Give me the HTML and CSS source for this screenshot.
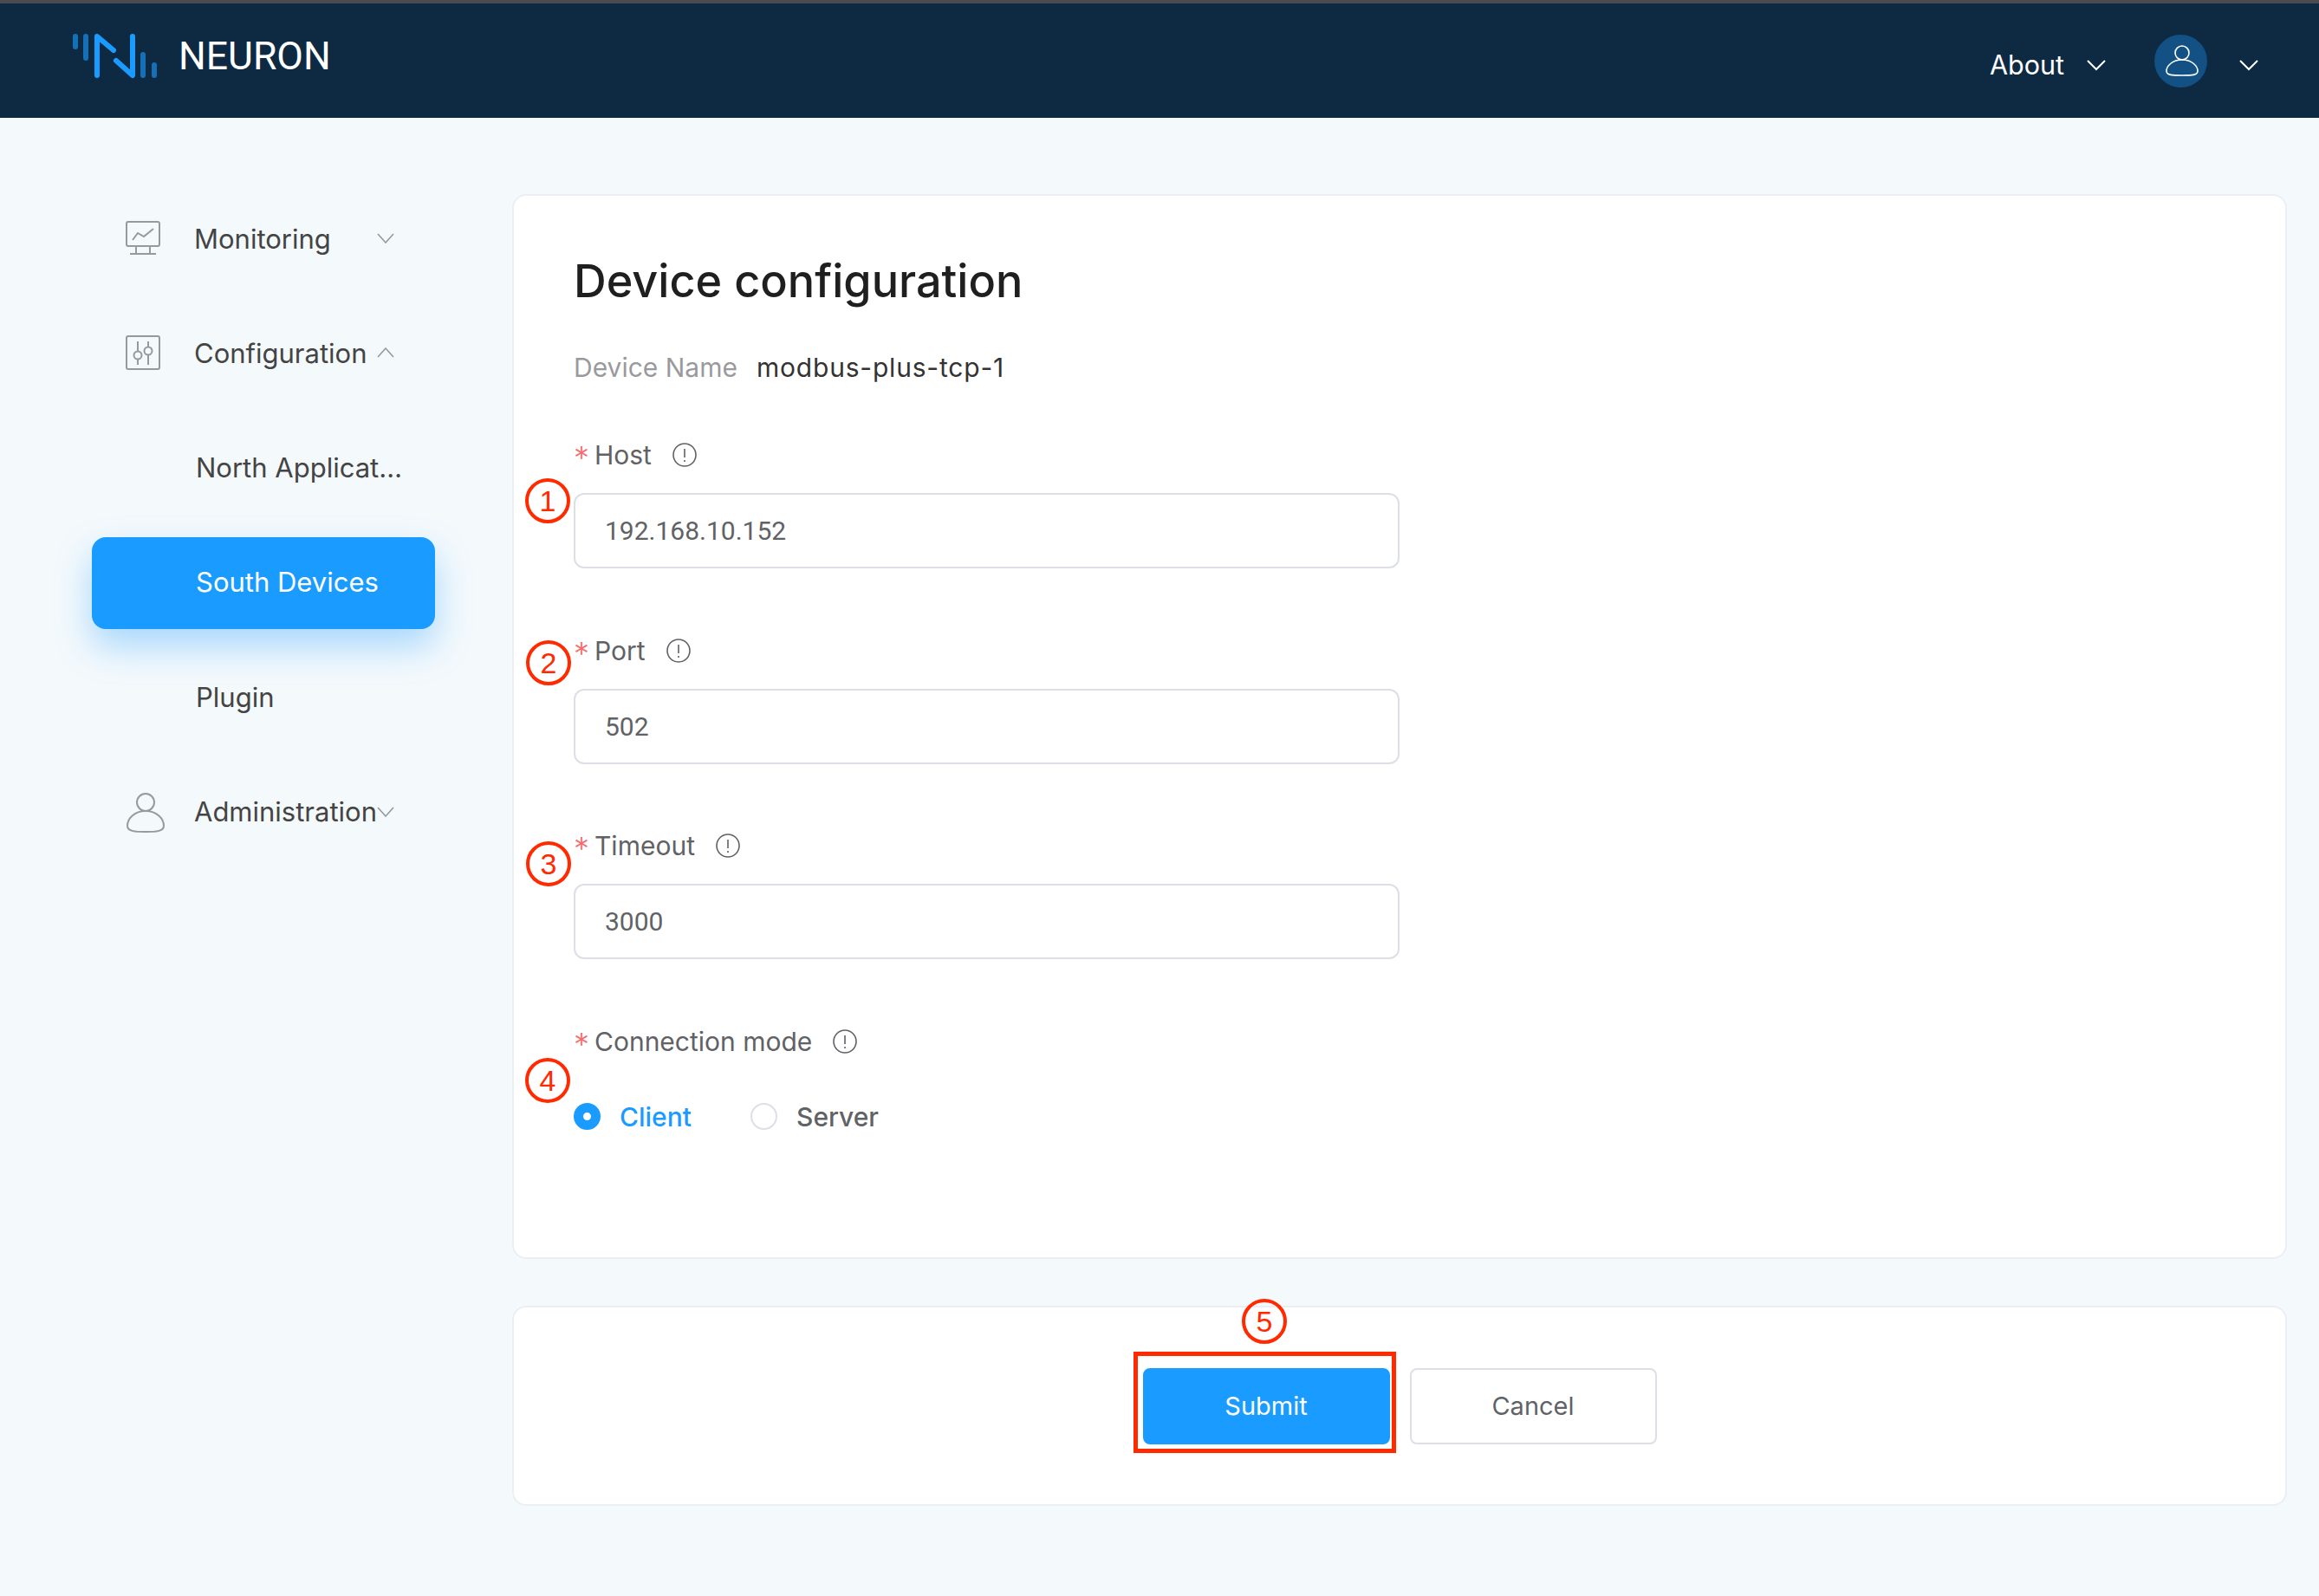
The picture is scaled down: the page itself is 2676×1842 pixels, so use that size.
FILE: index.html
```html
<!DOCTYPE html>
<html lang="en">
<head>
    <meta charset="UTF-8">
    <title>Neuron - Device configuration</title>
    <link rel="stylesheet" href="styles.css">
</head>
<body>
    <header class="topbar">
        <div class="brand">
            <svg class="logo" width="100" height="54" viewBox="0 0 100 54" fill="none" stroke-linecap="round" stroke-width="6">
                <path d="M4 4V16M16 4V29M82 25V49M95 37V49" stroke="#1570b8"/>
                <path d="M29 49V4L48 20M51 32L70 49V4" stroke="#1a9bff" stroke-linejoin="round"/>
            </svg>
            <span class="brand-name">NEURON</span>
        </div>
        <div class="top-actions">
            <span class="about">About</span>
            <svg class="chev-top" width="24" height="14" viewBox="0 0 24 14"><path d="M2 2L12 12L22 2"/></svg>
            <span class="avatar">
                <svg width="40" height="40" viewBox="0 0 40 40" fill="none" stroke="#fff" stroke-width="1.6">
                    <circle cx="21" cy="11" r="8"/>
                    <path d="M21 19C10 19 3 26 3 32C3 37 10 37 21 37C32 37 39 37 39 32C39 26 32 19 21 19Z"/>
                </svg>
            </span>
            <svg class="chev-top" width="24" height="14" viewBox="0 0 24 14"><path d="M2 2L12 12L22 2"/></svg>
        </div>
    </header>

    <div class="layout">
        <nav class="sidebar">
            <div class="nav-item">
                <svg class="nav-icon" width="44" height="42" viewBox="2 1 44 42" fill="none" stroke="#96999f" stroke-width="2">
                    <rect x="2" y="2" width="38" height="28" rx="2"/>
                    <path d="M9 23L15 15L22 19L33 10M13 30V39M29 30V39M6 39H36"/>
                </svg>
                <span class="nav-label">Monitoring</span>
                <svg class="chev" width="20" height="12" viewBox="0 0 20 12"><path d="M1 1L10 11L19 1"/></svg>
            </div>
            <div class="nav-item">
                <svg class="nav-icon" width="44" height="42" viewBox="2 1 44 42" fill="none" stroke="#96999f" stroke-width="2">
                    <rect x="2" y="2" width="38" height="38" rx="2"/>
                    <circle cx="15" cy="24" r="4.5"/>
                    <circle cx="27" cy="19" r="4.5"/>
                    <path d="M15 8V19.5M15 28.5V35M27 8V14.5M27 23.5V35"/>
                </svg>
                <span class="nav-label">Configuration</span>
                <svg class="chev" width="20" height="12" viewBox="0 0 20 12"><path d="M1 11L10 1L19 11"/></svg>
            </div>
            <div class="nav-item nav-sub"><span class="nav-label">North Applicat…</span></div>
            <div class="nav-item nav-sub nav-active"><span class="nav-label">South Devices</span></div>
            <div class="nav-item nav-sub"><span class="nav-label">Plugin</span></div>
            <div class="nav-item">
                <svg class="nav-icon" width="46" height="46" viewBox="0 0 46 46" fill="none" stroke="#96999f" stroke-width="2">
                    <circle cx="23" cy="11" r="10"/>
                    <path d="M23 21C10 21 2 30 2 38C2 45 12 45 23 45C34 45 44 45 44 38C44 30 36 21 23 21Z"/>
                </svg>
                <span class="nav-label">Administration</span>
                <svg class="chev" width="20" height="12" viewBox="0 0 20 12"><path d="M1 1L10 11L19 1"/></svg>
            </div>
        </nav>

        <main class="content">
            <section class="card form-card">
                <h1 class="title">Device configuration</h1>
                <div class="device-name">
                    <span class="device-key">Device Name</span>
                    <span class="device-value">modbus-plus-tcp-1</span>
                </div>

                <div class="field">
                    <label class="field-label"><span class="req">*</span>Host<svg class="info" width="30" height="30" viewBox="0 0 30 30"><circle cx="15" cy="15" r="13"/><path d="M15 8V18M15 21V23"/></svg></label>
                    <input class="text-input" type="text" value="192.168.10.152">
                </div>
                <div class="field">
                    <label class="field-label"><span class="req">*</span>Port<svg class="info" width="30" height="30" viewBox="0 0 30 30"><circle cx="15" cy="15" r="13"/><path d="M15 8V18M15 21V23"/></svg></label>
                    <input class="text-input" type="text" value="502">
                </div>
                <div class="field">
                    <label class="field-label"><span class="req">*</span>Timeout<svg class="info" width="30" height="30" viewBox="0 0 30 30"><circle cx="15" cy="15" r="13"/><path d="M15 8V18M15 21V23"/></svg></label>
                    <input class="text-input" type="text" value="3000">
                </div>
                <div class="field">
                    <label class="field-label"><span class="req">*</span>Connection mode<svg class="info" width="30" height="30" viewBox="0 0 30 30"><circle cx="15" cy="15" r="13"/><path d="M15 8V18M15 21V23"/></svg></label>
                    <div class="radios">
                        <span class="radio radio-on"><i class="radio-dot"></i>Client</span>
                        <span class="radio"><i class="radio-dot"></i>Server</span>
                    </div>
                </div>
            </section>

            <section class="card actions-card">
                <button class="btn btn-primary">Submit</button>
                <button class="btn">Cancel</button>
            </section>
        </main>
    </div>

    <!-- red annotations drawn over the screenshot -->
    <span class="mark mark-1">1</span>
    <span class="mark mark-2">2</span>
    <span class="mark mark-3">3</span>
    <span class="mark mark-4">4</span>
    <span class="mark mark-5">5</span>
    <span class="mark-box"></span>
</body>
</html>
```

FILE: styles.css
```css
body {
    margin: 0;
    height: 1842px;
    overflow: hidden;
    position: relative;
    background-color: #f4f9fc;
    font-family: 'Inter', 'Noto Sans', sans-serif;
    color: #444;
}

.topbar {
    height: 132px;
    border-top: 4px solid #4b4b52;
    background-color: #0d2a42;
    display: flex;
    justify-content: space-between;
    padding: 0 69px 0 83px;
    color: #fff;
}

.brand {
    display: flex;
    align-items: flex-start;
    padding-top: 34px;
}

.logo {
    margin-right: 23px;
}

.brand-name {
    font-family: 'Roboto', sans-serif;
    font-size: 44.5px;
    line-height: 54px;
}

.top-actions {
    display: flex;
    align-items: center;
    height: 132px;
}

.about {
    font-size: 30.5px;
    margin-right: 25px;
    padding-top: 8px;
}

.chev-top {
    fill: none;
    stroke: #fff;
    stroke-width: 2;
    margin-top: 10px;
}

.avatar {
    width: 61px;
    height: 61px;
    border-radius: 50%;
    background-color: #135083;
    margin: 0 36px 0 55px;
    display: flex;
    align-items: center;
    justify-content: center;
}

.layout {
    display: flex;
}

.sidebar {
    width: 396px;
    margin: 87px 89px 0 106px;
    display: flex;
    flex-direction: column;
    gap: 26.33px;
    flex-shrink: 0;
}

.nav-item {
    height: 106px;
    display: flex;
    align-items: center;
    position: relative;
    padding-left: 39px;
    border-radius: 16px;
    font-size: 31px;
}

.nav-label {
    margin-top: -2px;
}

.nav-icon {
    width: 46px;
    flex-shrink: 0;
    margin-right: 33px;
}

.nav-sub {
    padding-left: 120px;
}

.nav-active {
    background-color: #1a9bff;
    color: #fff;
    box-shadow: 0 20px 40px rgba(26, 155, 255, 0.35);
}

.chev {
    position: absolute;
    left: 329px;
    top: 46px;
    fill: none;
    stroke: #96999f;
    stroke-width: 1.6;
}

.content {
    flex: 1;
    margin: 88px 37px 0 0;
    display: flex;
    flex-direction: column;
    gap: 54px;
}

.card {
    background-color: #fff;
    border: 2px solid #ebeff5;
    border-radius: 16px;
    box-sizing: border-box;
}

.form-card {
    height: 1229px;
    padding: 63px 69px;
}

.title {
    margin: 0;
    font-size: 52.2px;
    line-height: 70px;
    font-weight: 500;
    color: #1f1f1f;
}

.device-name {
    margin-top: 45px;
    height: 40px;
    display: flex;
    align-items: center;
    font-size: 30px;
    margin-bottom: 61px;
}

.device-key {
    color: #9a9a9e;
    margin-right: 22px;
}

.device-value {
    color: #333;
    letter-spacing: 0.8px;
}

.field {
    margin-bottom: 74.5px;
}

.field-label {
    display: flex;
    align-items: center;
    height: 40px;
    font-size: 30px;
    color: #606266;
    margin-bottom: 24px;
}

.req {
    color: #f56c6c;
    width: 24px;
    font-size: 36px;
    font-weight: 300;
    line-height: 40px;
    padding-top: 6px;
}

.info {
    margin-left: 23px;
    fill: none;
    stroke: #606266;
    stroke-width: 1.6;
}

.text-input {
    display: block;
    width: 953px;
    height: 87px;
    box-sizing: border-box;
    border: 2px solid #dcdfe6;
    border-radius: 12px;
    padding: 0 34px;
    font-family: 'Roboto', sans-serif;
    font-size: 30px;
    color: #606266;
    background-color: #fff;
}

.radios {
    display: flex;
    gap: 68px;
    height: 40px;
    align-items: center;
    margin-top: 47px;
}

.radio {
    display: flex;
    align-items: center;
    font-size: 30px;
    font-weight: 500;
    color: #606266;
}

.radio-dot {
    width: 31px;
    height: 31px;
    box-sizing: border-box;
    border: 2px solid #dcdfe6;
    border-radius: 50%;
    margin-right: 22px;
    background-color: #fff;
}

.radio-on {
    color: #1a9bff;
}

.radio-on .radio-dot {
    border: 11px solid #1a9bff;
}

.actions-card {
    height: 231px;
    display: flex;
    align-items: center;
    justify-content: center;
    gap: 23px;
}

.btn {
    width: 285px;
    height: 88px;
    border: 2px solid #dcdfe6;
    border-radius: 8px;
    background-color: #fff;
    font-family: inherit;
    font-size: 29px;
    color: #606266;
}

.btn-primary {
    background-color: #1a9bff;
    border-color: #1a9bff;
    color: #fff;
}

.mark {
    position: absolute;
    width: 52px;
    height: 52px;
    box-sizing: border-box;
    border: 4px solid #ff2a00;
    border-radius: 50%;
    display: flex;
    align-items: center;
    justify-content: center;
    font-family: 'Liberation Sans', sans-serif;
    font-size: 34px;
    color: #ff2a00;
}

.mark-1 { left: 606px; top: 552px; }
.mark-2 { left: 607px; top: 739px; }
.mark-3 { left: 607px; top: 971px; }
.mark-4 { left: 606px; top: 1221px; }
.mark-5 { left: 1433px; top: 1499px; }

.mark-box {
    position: absolute;
    left: 1308px;
    top: 1560px;
    width: 303px;
    height: 117px;
    box-sizing: border-box;
    border: 5px solid #ff2a00;
}
```
